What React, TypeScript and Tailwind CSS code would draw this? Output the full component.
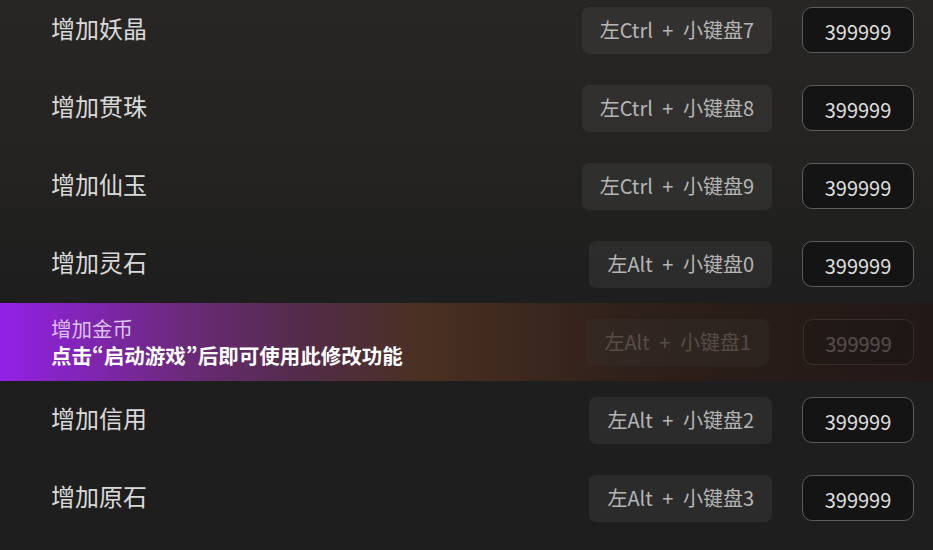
import React from 'react';

type Cheat = { label: string; hotkey: string; value: string; locked?: boolean };

const CHEATS: Cheat[] = [
  { label: '增加妖晶', hotkey: '左Ctrl + 小键盘7', value: '399999' },
  { label: '增加贯珠', hotkey: '左Ctrl + 小键盘8', value: '399999' },
  { label: '增加仙玉', hotkey: '左Ctrl + 小键盘9', value: '399999' },
  { label: '增加灵石', hotkey: '左Alt + 小键盘0', value: '399999' },
  { label: '增加金币', hotkey: '左Alt + 小键盘1', value: '399999', locked: true },
  { label: '增加信用', hotkey: '左Alt + 小键盘2', value: '399999' },
  { label: '增加原石', hotkey: '左Alt + 小键盘3', value: '399999' },
];

const CheatRow: React.FC<{ cheat: Cheat }> = ({ cheat }) => {
  if (cheat.locked) {
    // locked row: gradient banner over a dimmed hotkey/value
    return (
      <div className="h-[78px] flex items-center pl-[51px] pr-[19px] bg-[linear-gradient(90deg,#9321e6_0%,#6a2a78_20%,#532c4a_32%,#4a3022_45%,#2e201a_68%,#221816_100%)]">
        <div className="flex-1 flex flex-col gap-[7px] -mt-[1px]">
          <span className="text-[20.5px] leading-[20px] text-[#dcc2ee]">{cheat.label}</span>
          <span className="text-[20.5px] leading-[20px] font-bold text-white [font-feature-settings:'pwid']">点击“启动游戏”后即可使用此修改功能</span>
        </div>
        <div className="flex items-center gap-[34px] opacity-[0.25]">
          <div className="h-[47px] px-[18px] flex items-center rounded-[7px] bg-[#3a3836] text-[20px] text-[#d0d0d0] [word-spacing:5px]">{cheat.hotkey}</div>
          <div className="w-[111px] h-[46px] flex items-center justify-center rounded-[10px] border-[1.5px] border-[#6a6a6a] bg-[#141414] text-[20px] text-[#e0e0e0] pt-[3px]">{cheat.value}</div>
        </div>
      </div>
    );
  }
  return (
    <div className="h-[78px] flex items-center pl-[51px] pr-[19px]">
      <span className="flex-1 text-[24px] text-[#d9d9d9] -mt-[4px]">{cheat.label}</span>
      <div className="flex items-center gap-[30px]">
        <div className="h-[47px] px-[18px] flex items-center rounded-[7px] bg-white/[0.06] text-[20px] text-[#b6b6b6] [word-spacing:5px]">{cheat.hotkey}</div>
        <div className="w-[112px] h-[46px] flex items-center justify-center rounded-[10px] border-[1.5px] border-[#5c5c5a] bg-[#141414] text-[20px] text-[#dedede] pt-[3px]">{cheat.value}</div>
      </div>
    </div>
  );
};

export default function App() {
  return (
    <div className="w-[933px] h-[550px] overflow-hidden bg-[#1e1e1e] font-['Noto_Sans_CJK_SC','Noto_Sans',sans-serif]">
      <div className="bg-[linear-gradient(180deg,#282624_0%,#242321_30%,#1e1e1e_55%)] -mt-[9px]">
        {CHEATS.map(c => (
          <CheatRow key={c.label} cheat={c} />
        ))}
      </div>
    </div>
  );
}
